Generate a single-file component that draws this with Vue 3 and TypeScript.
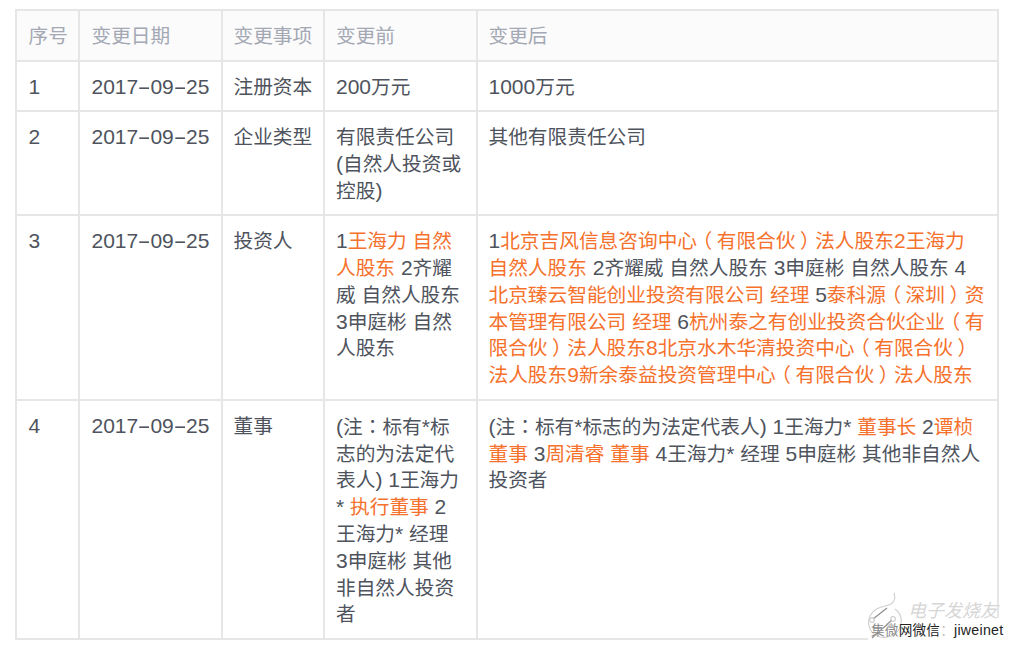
<script setup lang="ts">
interface Seg { t: string; o?: boolean }
interface Tok { t: string; c: string[] }
interface Row { id: string; date: string; item: string; before: Seg[]; after: Seg[] }

function toks(input: string | Seg[]): Tok[] {
  const segs: Seg[] = typeof input === 'string' ? [{ t: input }] : input
  const out: Tok[] = []
  for (const s of segs) {
    const parts = s.t.match(/[（）：-]|[0-9A-Za-z*() ]+|[^（）：0-9A-Za-z*() -]+/g) ?? []
    for (const p of parts) {
      const c: string[] = s.o ? ['hot'] : []
      if (p === '（') c.push('pl')
      else if (p === '）') c.push('pr')
      else if (p === '：') c.push('colon')
      else if (p === '-') c.push('dash')
      else if (/^[0-9A-Za-z*() ]/.test(p)) c.push('lat')
      out.push({ t: p, c })
    }
  }
  return out
}

const heads = ['序号', '变更日期', '变更事项', '变更前', '变更后'].map((h) => toks(h))
const rows: Row[] = [
  { id: '1', date: '2017-09-25', item: '注册资本', before: [{ t: '200万元' }], after: [{ t: '1000万元' }] },
  { id: '2', date: '2017-09-25', item: '企业类型', before: [{ t: '有限责任公司(自然人投资或控股)' }], after: [{ t: '其他有限责任公司' }] },
  { id: '3', date: '2017-09-25', item: '投资人',
    before: [{ t: '1' }, { t: '王海力 自然人股东', o: true }, { t: ' 2齐耀威 自然人股东 3申庭彬 自然人股东' }],
    after: [{ t: '1' }, { t: '北京吉风信息咨询中心（有限合伙）法人股东2王海力 自然人股东', o: true }, { t: ' 2齐耀威 自然人股东 3申庭彬 自然人股东 4' }, { t: '北京臻云智能创业投资有限公司 经理', o: true }, { t: ' 5' }, { t: '泰科源（深圳）资本管理有限公司 经理', o: true }, { t: ' 6' }, { t: '杭州泰之有创业投资合伙企业（有限合伙）法人股东8北京水木华清投资中心（有限合伙）法人股东9新余泰益投资管理中心（有限合伙）法人股东', o: true }] },
  { id: '4', date: '2017-09-25', item: '董事',
    before: [{ t: '(注：标有*标志的为法定代表人) 1王海力* ' }, { t: '执行董事', o: true }, { t: ' 2王海力* 经理 3申庭彬 其他非自然人投资者' }],
    after: [{ t: '(注：标有*标志的为法定代表人) 1王海力* ' }, { t: '董事长', o: true }, { t: ' 2' }, { t: '谭桢 董事', o: true }, { t: ' 3' }, { t: '周清睿 董事', o: true }, { t: ' 4王海力* 经理 5申庭彬 其他非自然人投资者' }] },
]
const table = rows.map((r) => [toks(r.id), toks(r.date), toks(r.item), toks(r.before), toks(r.after)])
</script>

<template>
  <div class="page">
    <table class="grid">
      <colgroup>
        <col class="c1" /><col class="c2" /><col class="c3" /><col class="c4" /><col class="c5" />
      </colgroup>
      <thead>
        <tr>
          <th v-for="(h, i) in heads" :key="i"><span v-for="(k, j) in h" :key="j" :class="k.c">{{ k.t }}</span></th>
        </tr>
      </thead>
      <tbody>
        <tr v-for="(r, ri) in table" :key="ri">
          <td v-for="(cell, ci) in r" :key="ci"><span v-for="(k, j) in cell" :key="j" :class="k.c">{{ k.t }}</span></td>
        </tr>
      </tbody>
    </table>
    <div class="mark">
      <div class="patch"></div>
      <svg class="logo" width="36" height="48" viewBox="0 0 36 48" fill="none" stroke="#cfcfcf" stroke-width="1.1">
        <path d="M27 1c2 6 0 9-3 11C18 15 8 14 3 24c-4 9 1 19 10 21 11 2 20-4 21-14 1-6-2-11-6-14" />
        <path d="M6 27 L20 16 M25 28 L5 46" stroke="#8a8a8a" />
        <circle cx="5" cy="28" r="2.4" /><circle cx="26" cy="27" r="2.4" />
      </svg>
      <span class="brand">电子发烧友</span>
      <span class="wechat"><span class="dim">集微</span>网微信<span class="dimmer">：</span><span class="handle">jiweinet</span></span>
    </div>
  </div>
</template>

<style>
html, body { margin: 0; background: #fff; }
</style>

<style scoped>
.page {
  position: relative;
  width: 1015px;
  height: 645px;
  overflow: hidden;
  padding: 9px 0 0 15px;
  box-sizing: border-box;
  font-family: "Liberation Sans", "Noto Sans CJK SC", sans-serif;
}
.grid {
  width: 984px;
  table-layout: fixed;
  border-collapse: collapse;
  font-size: 19.7px;
  line-height: 26.8px;
  color: #4e535d;
}
.c1 { width: 63px; }
.c2 { width: 143px; }
.c3 { width: 102px; }
.c4 { width: 153px; }
th, td {
  border: 2px solid #e6e6e6;
  padding: 12px 12px 9.76px 11.5px;
  text-align: left;
  vertical-align: top;
  font-weight: 400;
  word-break: break-all;
}
th:nth-child(-n+3), td:nth-child(-n+3) { padding-right: 0; }
th:nth-child(3), td:nth-child(3) { padding-left: 10.5px; }
th:nth-child(4), td:nth-child(4) { padding-left: 11px; }
th:nth-child(5), td:nth-child(5) { padding-left: 10.5px; padding-right: 12.3px; }
th {
  background: #fbfbfb;
  color: #a3a8b4;
}
.hot { color: #f5712c; }
.lat { font-size: 21px; line-height: 1; }
.dash {
  display: inline-block;
  width: 12.2px;
  font-size: 21px;
  line-height: 1;
  text-align: center;
  transform: scaleX(1.9);
}
.pl, .pr {
  display: inline-block;
  line-height: 1;
}
.pl { transform: translateX(-4.5px); }
.pr { transform: translateX(4.5px); }
.colon { font-family: "Noto Sans CJK TC", sans-serif; }
.mark {
  position: absolute;
  left: 868px;
  top: 590px;
  width: 147px;
  height: 55px;
}
.patch {
  position: absolute;
  left: 0;
  right: 0;
  top: 28px;
  bottom: 0;
  background: #fff;
}
.logo { position: absolute; left: -1px; top: 2px; filter: blur(0.4px); }
.brand {
  position: absolute;
  left: 40px;
  top: 10px;
  font-size: 18px;
  line-height: 22px;
  font-style: italic;
  color: #d6d6d6;
  white-space: nowrap;
}
.wechat {
  position: absolute;
  left: 3px;
  top: 31px;
  font-size: 13.6px;
  line-height: 18px;
  color: #222;
  white-space: nowrap;
  letter-spacing: 0.25px;
  text-shadow: 0 0 1px #fff;
}
.handle { font-size: 14.2px; }
.dim { color: #8a8a8a; }
.dimmer { color: #c4c4c4; }
</style>
